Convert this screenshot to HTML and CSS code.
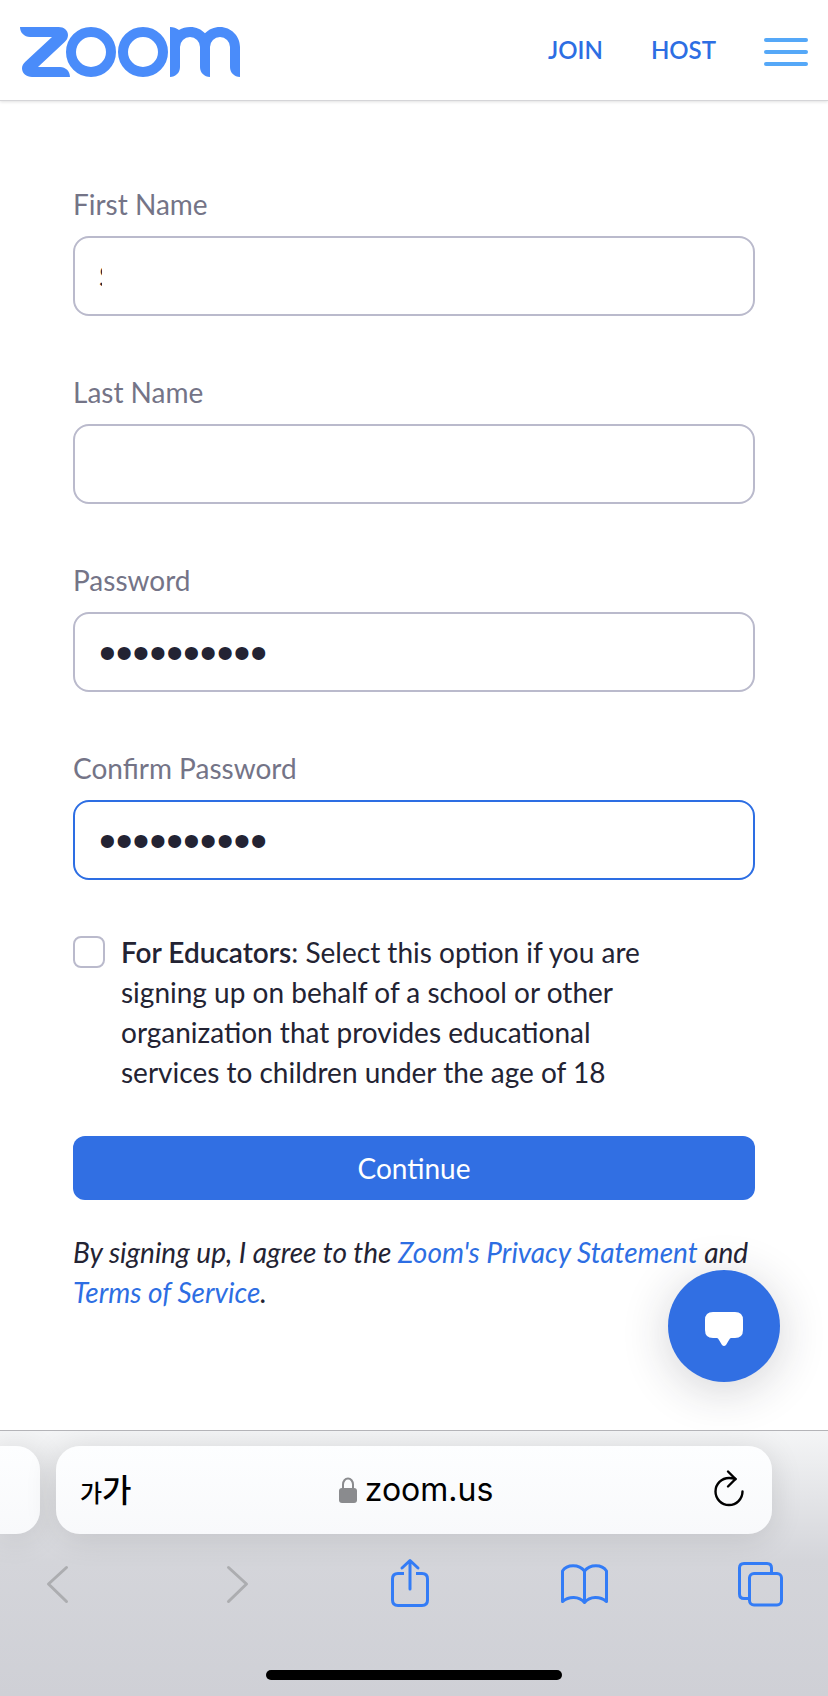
FILE: index.html
```html
<!DOCTYPE html>
<html lang="en">
<head>
  <meta charset="UTF-8" />
  <meta name="viewport" content="width=device-width, initial-scale=1.0"/>
  <title>Zoom | Sign Up</title>
  <link rel="stylesheet" href="styles.css">
</head>
<body>
<header>
  <a href="#" class="logo" aria-label="Zoom">
    <svg viewBox="60 81 660 150" width="220" height="50" fill="#4a8cfa">
      <path d="M60 81H176C192 81 204 91 204 105C204 114 200 120 194 126L114 201H180C197 201 210 214 210 231H96C79 231 66 220 66 205C66 197 70 191 76 185L156 111H90C73 111 60 98 60 81Z"/>
      <circle cx="273" cy="156" r="60" fill="none" stroke="#4a8cfa" stroke-width="30"/>
      <circle cx="429" cy="156" r="60" fill="none" stroke="#4a8cfa" stroke-width="30"/>
      <path d="M510 81C520 81 529 84 537 90C546 84 558 81 571 81C589 81 604 88 615 100C626 88 642 81 660 81C693 81 720 108 720 141V231C703 231 690 218 690 201V141A30 30 0 0 0 630 141V231C613 231 600 218 600 201V141A30 30 0 0 0 540 141V201C540 218 527 231 510 231Z"/>
    </svg>
  </a>
  <nav>
    <a href="#">JOIN</a>
    <a href="#">HOST</a>
    <button type="button" class="menu-btn" aria-label="Menu">
      <span></span>
      <span></span>
      <span></span>
    </button>
  </nav>
</header>

<main>
  <form class="signup-form">
    <div class="field">
      <label for="firstName">First Name</label>
      <div class="masked">
        <input type="text" id="firstName" value="S" />
        <span class="mask"></span>
      </div>
    </div>

    <div class="field">
      <label for="lastName">Last Name</label>
      <input type="text" id="lastName" />
    </div>

    <div class="field">
      <label for="password">Password</label>
      <input type="password" id="password" value="abcdefghij" />
    </div>

    <div class="field">
      <label for="confirmPassword">Confirm Password</label>
      <input type="password" id="confirmPassword" class="active" value="abcdefghij" />
    </div>

    <div class="educators">
      <input type="checkbox" id="educators" />
      <label for="educators"><strong>For Educators</strong>: Select this option if you are signing up on behalf of a school or other organization that provides educational services to children under the age of 18</label>
    </div>

    <button type="submit" class="continue-btn">Continue</button>

    <p class="terms">By signing up, I agree to the <a href="#">Zoom's Privacy Statement</a> and <a href="#">Terms of Service</a>.</p>
  </form>

  <button type="button" class="chat-btn" aria-label="Chat">
    <svg viewBox="0 0 38 34" width="38" height="34" fill="#fff">
      <path d="M8 0H30Q38 0 38 8V18Q38 26 30 26H26Q25 26 24 28L21 33Q19 35 17 33L14 28Q13 26 12 26H8Q0 26 0 18V8Q0 0 8 0Z"/>
    </svg>
  </button>
</main>

<footer class="browser-bar">
  <div class="tabs">
    <div class="tab previous"></div>
    <div class="tab current">
      <button type="button" class="text-size" lang="ko"><small>가</small>가</button>
      <div class="address">
        <svg viewBox="0 0 18 26" width="18" height="26">
          <path d="M4 12V7.5A5 6 0 0 1 14 7.5V12" fill="none" stroke="#8a8b8e" stroke-width="2"/>
          <rect x="0" y="11" width="18" height="15" rx="3" fill="#8a8b8e"/>
        </svg>
        <span>zoom.us</span>
      </div>
      <button type="button" class="reload" aria-label="Reload">
        <svg viewBox="0 0 30 36" width="30" height="36" fill="none" stroke="#000" stroke-width="2.4" stroke-linecap="round" stroke-linejoin="round">
          <path d="M28.500 19.500A13.500 13.500 0 1 1 15 6Q18.500 6 21.500 7"/>
          <path d="M14 -0.500L21.500 7L14 14.500"/>
        </svg>
      </button>
    </div>
  </div>

  <div class="toolbar">
    <button type="button" aria-label="Back" disabled>
      <svg viewBox="0 0 48 48"><path d="M30.500 7.500L12.500 24L30.500 41.500"/></svg>
    </button>
    <button type="button" aria-label="Forward" disabled>
      <svg viewBox="0 0 48 48"><path d="M17.500 7.500L35.500 24L17.500 41.500"/></svg>
    </button>
    <button type="button" aria-label="Share">
      <svg viewBox="0 0 48 48">
        <path d="M18 13.500H12Q6.500 13.500 6.500 19V40Q6.500 45.500 12 45.500H36Q41.500 45.500 41.500 40V19Q41.500 13.500 36 13.500H30" stroke-linecap="butt"/>
        <path d="M24 29V1M16 8L24 0.500L32 8"/>
      </svg>
    </button>
    <button type="button" aria-label="Bookmarks">
      <svg viewBox="0 0 48 48">
        <path d="M23.500 11C18 4 6 4 1.500 11V41.500C8 36 18 36 23.500 42.500C29 36 39 36 45.500 41.500V11C41 4 29 4 23.500 11V42"/>
      </svg>
    </button>
    <button type="button" aria-label="Tabs">
      <svg viewBox="0 0 48 48">
        <path d="M12 38.500H8Q3.500 38.500 3.500 34V8Q3.500 3.500 8 3.500H31Q35.500 3.500 35.500 8V13" stroke-linecap="butt"/>
        <rect x="13.500" y="13.500" width="32" height="31.500" rx="4.500"/>
      </svg>
    </button>
  </div>

  <div class="home-indicator"></div>
</footer>
</body>
</html>
```

FILE: styles.css
```css
* { box-sizing: border-box; margin: 0; padding: 0; }
body {
  font-family: Lato, sans-serif;
  font-size: 28px;
  line-height: 40px;
  background: #fff;
  color: #232333;
  min-height: 100vh;
  display: flex;
  flex-direction: column;
}
button {
  font: inherit;
  border: none;
  background: none;
  cursor: pointer;
}
a {
  color: #2d6ee3;
  text-decoration: none;
}
svg {
  display: block;
  overflow: visible;
}

header {
  height: 101px;
  padding: 4px 20px 0;
  display: flex;
  justify-content: space-between;
  align-items: center;
  border-bottom: 1px solid #d5d5d8;
  box-shadow: 0 1px 3px rgba(0, 0, 0, 0.12);
}
nav {
  display: flex;
  align-items: center;
  font-size: 24px;
  font-weight: 600;
}
nav a {
  margin-right: 48px;
  padding-bottom: 4px;
}
.menu-btn {
  width: 44px;
  display: flex;
  flex-direction: column;
  gap: 8px;
}
.menu-btn span {
  height: 4px;
  border-radius: 2px;
  background: #55a8f8;
}

main {
  position: relative;
  flex: 1;
  padding: 83px 73px 118px;
}
.field {
  display: flex;
  flex-direction: column;
  gap: 12px;
  margin-bottom: 56px;
}
.field label {
  color: #747487;
}
.field input {
  width: 100%;
  height: 80px;
  padding: 0 24px;
  border: 2px solid #babacc;
  border-radius: 16px;
  background: #fff;
  color: #232333;
  font-family: Lato, sans-serif;
  font-size: 28px;
  outline: none;
  display: block;
}
.field input[type="password"] {
  font-family: "Liberation Sans", sans-serif;
  font-size: 48px;
}
.field input.active {
  border-color: #2d6ee3;
}
.masked {
  position: relative;
}
/* hides the rest of the typed name */
.mask {
  position: absolute;
  left: 29px;
  top: 16px;
  width: 200px;
  height: 48px;
  background: #fff;
}

.educators {
  display: flex;
  align-items: flex-start;
  gap: 16px;
  margin: -4px 0 44px;
  padding-right: 80px;
}
.educators input {
  appearance: none;
  flex: none;
  width: 32px;
  height: 32px;
  margin-top: 4px;
  border: 2px solid #babacc;
  border-radius: 8px;
}
.educators strong {
  font-weight: 600;
}
.continue-btn {
  width: 100%;
  height: 64px;
  border-radius: 12px;
  background: #316fe3;
  color: #fff;
}
.terms {
  margin-top: 32px;
  font-style: italic;
}

.chat-btn {
  position: absolute;
  right: 48px;
  bottom: 48px;
  width: 112px;
  height: 112px;
  padding-top: 6px;
  border-radius: 50%;
  background: #316fe3;
  box-shadow: 0 8px 48px rgba(35, 35, 51, 0.2);
  display: flex;
  align-items: center;
  justify-content: center;
}

.browser-bar {
  position: relative;
  border-top: 1px solid #b4b4b8;
  background: linear-gradient(#f4f5f6, #d4d5da 130px, #cfd0d6);
  padding: 15px 0 16px;
  overflow: hidden;
}
.tabs {
  display: flex;
  gap: 16px;
  padding-right: 56px;
}
.tab {
  height: 88px;
  border-radius: 24px;
  background: linear-gradient(#fdfeff, #f8f9fb);
  box-shadow: 0 4px 32px rgba(0, 0, 0, 0.12);
}
.tab.previous {
  width: 40px;
  border-radius: 0 24px 24px 0;
}
.tab.current {
  flex: 1;
  display: flex;
  align-items: center;
  justify-content: space-between;
  padding: 0 28px 0 24px;
}
.text-size {
  width: 56px;
  text-align: left;
  white-space: nowrap;
  font-family: "Noto Sans CJK KR", sans-serif;
  font-size: 32px;
  font-weight: 500;
}
.text-size small {
  font-size: 24px;
}
.address {
  display: flex;
  align-items: center;
  gap: 8px;
  font-family: Inter, sans-serif;
  font-size: 32px;
  color: #000;
}
.reload {
  width: 48px;
}
.reload svg {
  margin-left: auto;
}
.toolbar {
  display: flex;
  justify-content: space-between;
  padding: 26px 44px 0 36px;
}
.toolbar button {
  width: 48px;
  height: 48px;
}
.toolbar svg {
  width: 48px;
  height: 48px;
  fill: none;
  stroke: #337cf6;
  stroke-width: 3;
  stroke-linecap: round;
  stroke-linejoin: round;
}
.toolbar button:disabled svg {
  stroke: #acadb0;
}
.home-indicator {
  width: 296px;
  height: 10px;
  margin: 62px auto 0;
  border-radius: 5px;
  background: #000;
}
```
